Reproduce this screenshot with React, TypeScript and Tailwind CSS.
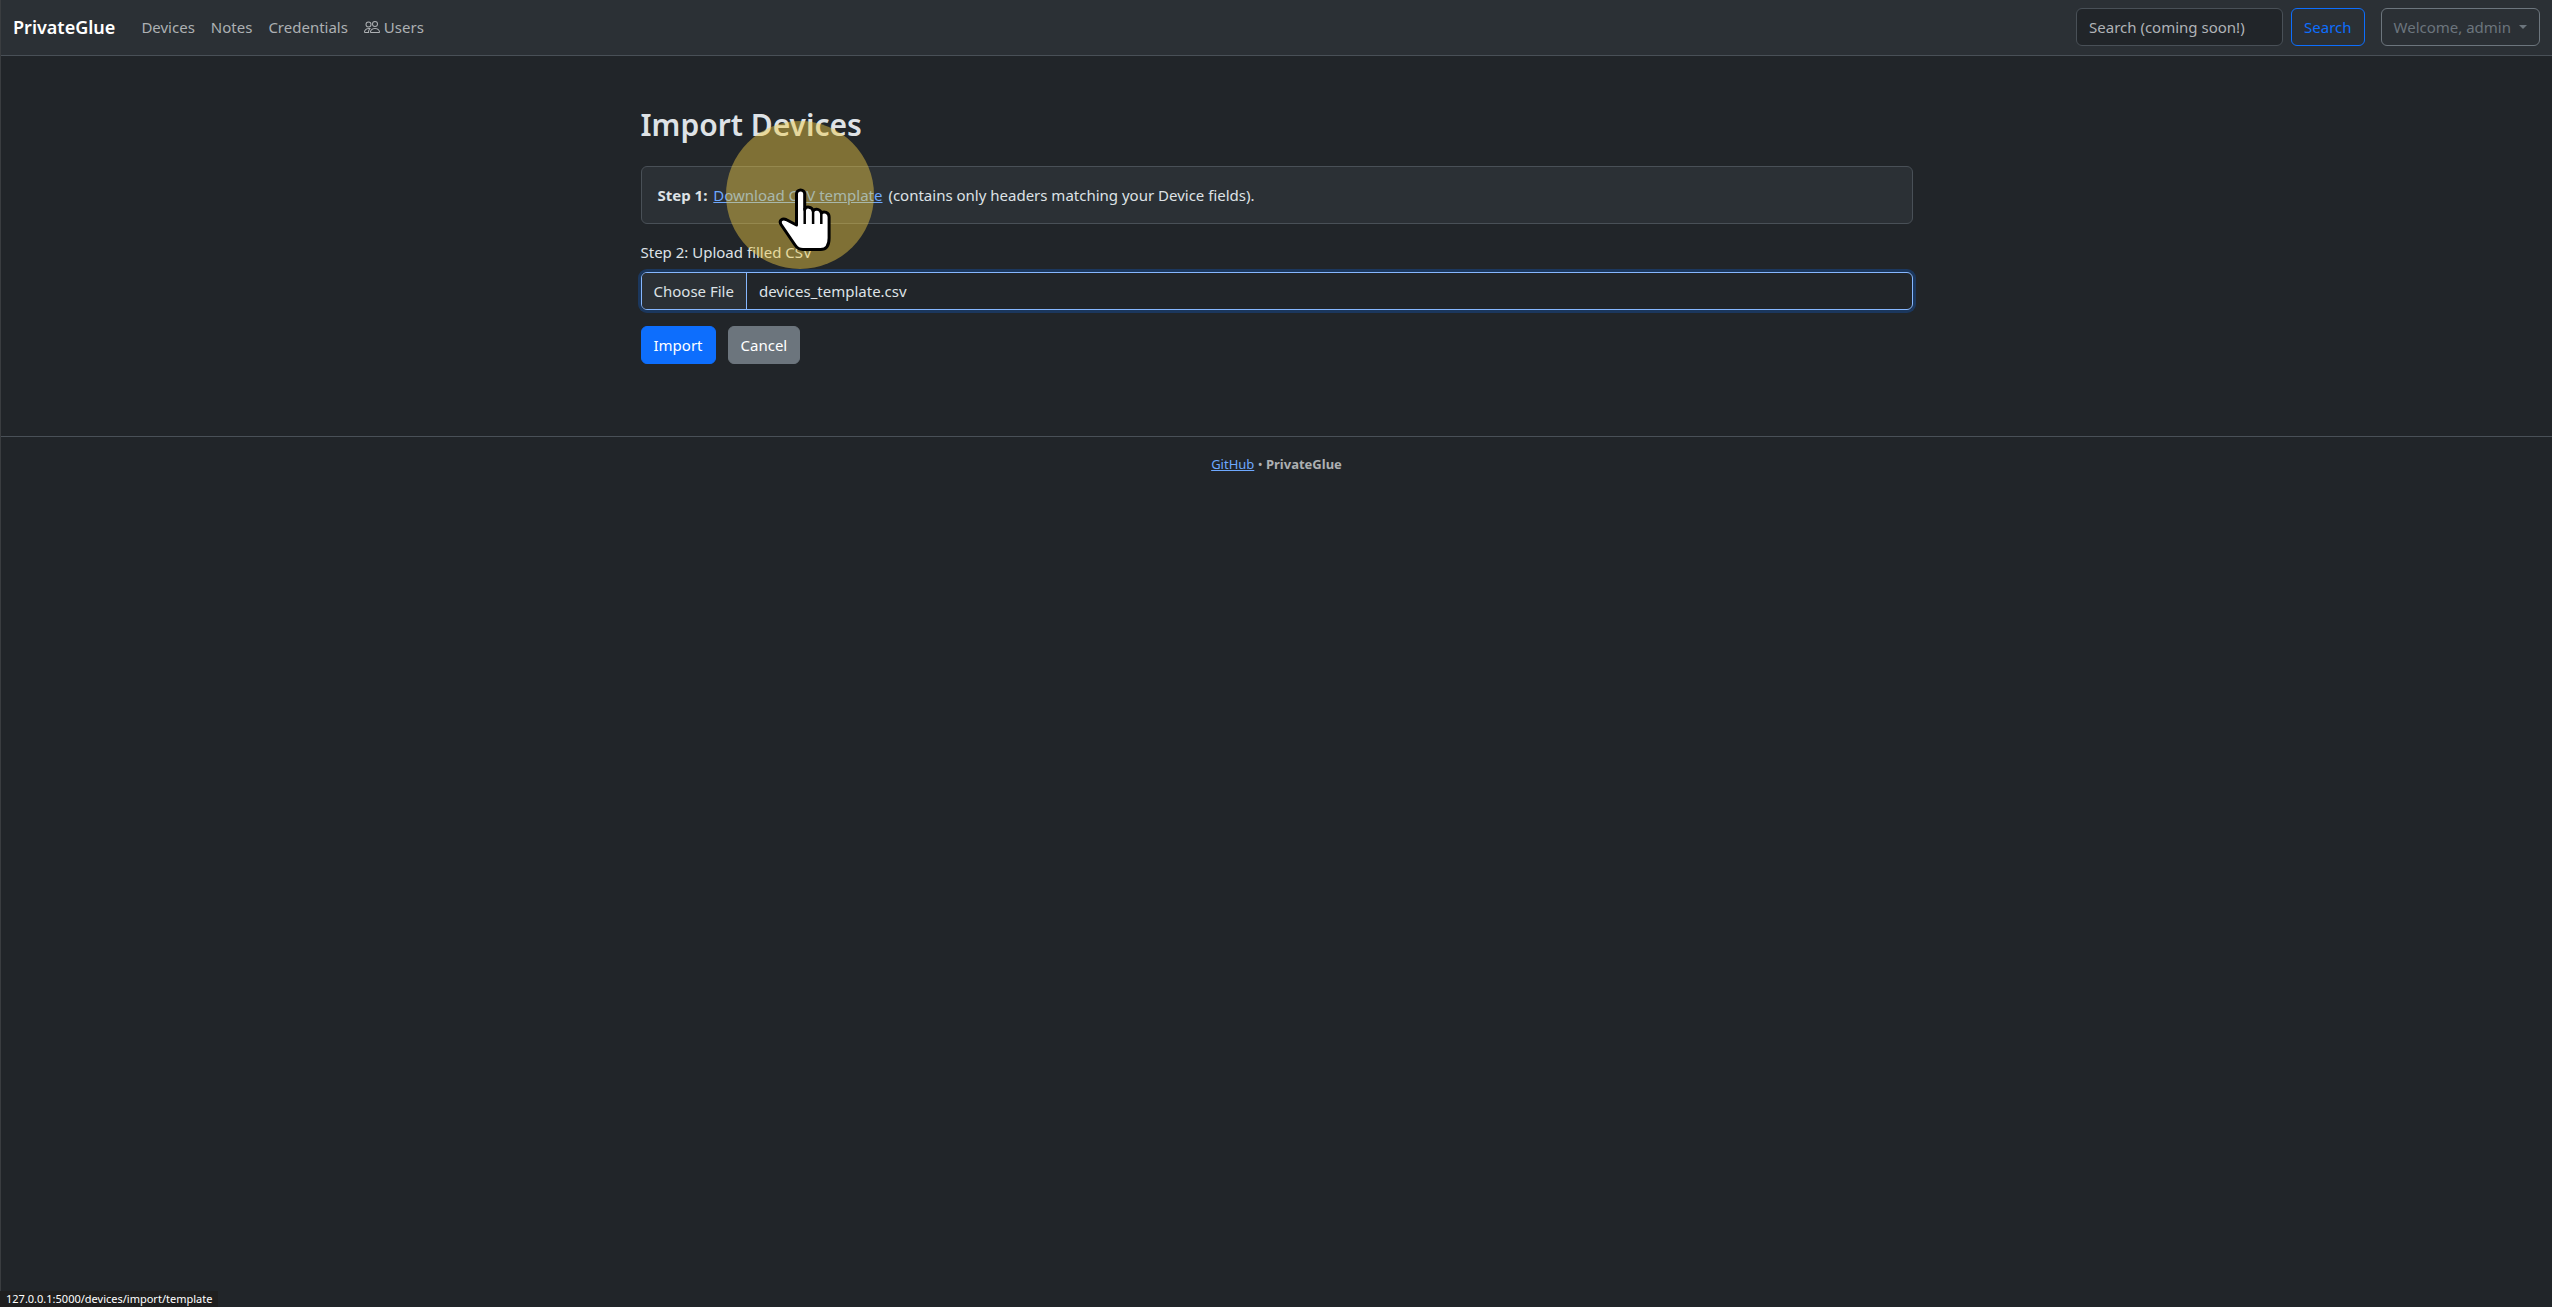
import React, { useEffect, useRef } from 'react';

const navLinks = ['Devices', 'Notes', 'Credentials'];

function PeopleIcon() {
  return (
    <svg className="inline-block size-4 align-[-2px]" viewBox="0 0 16 16" fill="currentColor" aria-hidden="true">
      <path d="M15 14s1 0 1-1-1-4-5-4-5 3-5 4 1 1 1 1zm-7.978-1L7 12.996c.001-.264.167-1.03.76-1.72C8.312 10.629 9.282 10 11 10c1.717 0 2.687.63 3.24 1.276.593.69.758 1.457.76 1.72l-.008.002-.014.002zM11 7a2 2 0 1 0 0-4 2 2 0 0 0 0 4m3-2a3 3 0 1 1-6 0 3 3 0 0 1 6 0M6.936 9.28a6 6 0 0 0-1.23-.247A7 7 0 0 0 5 9c-4 0-5 3-5 4q0 1 1 1h4.216A2.24 2.24 0 0 1 5 13c0-1.01.377-2.042 1.09-2.904.243-.294.526-.569.846-.816M4.92 10A5.5 5.5 0 0 0 4 13H1c0-.26.164-1.03.76-1.724.545-.636 1.492-1.256 3.16-1.275ZM1.5 5.5a3 3 0 1 1 6 0 3 3 0 0 1-6 0m3-2a2 2 0 1 0 0 4 2 2 0 0 0 0-4" />
    </svg>
  );
}

function Pointer() {
  return (
    <svg
      className="pointer-events-none absolute top-1/2 left-1/2 z-10 ml-0.5 size-[148px] max-w-none -translate-x-1/2 -translate-y-1/2"
      viewBox="0 0 148 148"
      aria-hidden="true"
    >
      <circle cx="74" cy="74" r="74" fill="#f2cc44" fillOpacity="0.45" />
      <path
        d="M70.5 104V73a4.1 4.1 0 0 1 8.2 0V88.500c1-3.400 7.400-3.400 8.400 1.500 2-3 7.400-2 8.200 2 2.500-2 7.800-1 7.800 4V117c0 8-3 11.500-8.500 11.500H77c-3.500 0-6-1.500-8-4.500L55 103.500c-2.500-4 1.500-6.500 5-5z"
        fill="#fff"
        stroke="#000"
        strokeWidth="3"
        strokeLinejoin="round"
      />
      <path d="M78.7 87v16M87.1 90v13M95.3 92v11" stroke="#000" strokeWidth="2.5" />
    </svg>
  );
}

function Navbar() {
  return (
    <header className="flex min-h-14 items-center border-b border-[#495057] bg-[#2b3035] px-3 pb-px">
      <a href="#" className="text-lg leading-6 font-semibold text-white">PrivateGlue</a>
      <nav className="ml-[18px] flex text-[#adb0b3]">
        {navLinks.map((label) => (
          <a key={label} href="#" className="px-2">{label}</a>
        ))}
        <a href="#" className="px-2"><PeopleIcon /> Users</a>
      </nav>
      <form className="ml-auto flex gap-2" onSubmit={(e) => e.preventDefault()}>
        <input
          type="search"
          aria-label="Search"
          placeholder="Search (coming soon!)"
          className="w-[207px] rounded-md border border-[#495057] bg-[#212529] px-3 py-[6px] placeholder:text-[#b0b3b7]"
        />
        <button className="rounded-md border border-[#0d6efd] px-3 py-[6px] text-[#0d6efd]">Search</button>
      </form>
      <button aria-haspopup="menu" className="ml-4 flex items-center gap-2 rounded-md border border-[#6c757d] px-3 py-[6px] text-[#6c757d]">
        Welcome, admin
        <span className="border-x-4 border-t-4 border-x-transparent" />
      </button>
    </header>
  );
}

export default function App() {
  const fileRef = useRef<HTMLInputElement>(null);

  useEffect(() => {
    const transfer = new DataTransfer();
    transfer.items.add(new File([''], 'devices_template.csv', { type: 'text/csv' }));
    if (fileRef.current) fileRef.current.files = transfer.files;
  }, []);

  return (
    <div className="min-h-screen border-l border-[#3a3d40] bg-[#212529] font-['Noto_Sans','Open_Sans',sans-serif] text-[15px] leading-6 text-[#dee2e6]">
      <Navbar />

      <main className="mx-auto max-w-[1320px] px-6 pt-[50px] pb-[72px]">
        <h2 className="mb-[22px] text-[30px] leading-[38px] font-semibold">Import Devices</h2>

        <div className="mb-4 rounded-md border border-[#495057] bg-[#2b3035] p-4">
          <strong>Step 1:</strong>{' '}
          <span className="relative mx-0.5 inline-block">
            <a href="#" className="text-[#6ea8fe] underline">Download CSV template</a>
            <Pointer />
          </span>{' '}
          (contains only headers matching your Device fields).
        </div>

        <form onSubmit={(e) => e.preventDefault()}>
          <label htmlFor="csv" className="mb-2 block">Step 2: Upload filled CSV</label>
          <input
            ref={fileRef}
            id="csv"
            type="file"
            accept=".csv"
            className="mb-4 block h-[38px] w-full overflow-hidden rounded-md border border-[#86b7fe] ring-3 ring-[#0d6efd]/25 file:mr-3 file:h-9 file:border-r file:border-[#86b7fe] file:bg-[#2b3035] file:px-3 file:text-[#dee2e6]"
          />
          <div className="flex gap-3">
            <button className="rounded-md border border-[#0d6efd] bg-[#0d6efd] px-3 py-[6px] text-white">Import</button>
            <button type="button" className="rounded-md border border-[#6c757d] bg-[#6c757d] px-3 py-[6px] text-white">Cancel</button>
          </div>
        </form>
      </main>

      <footer className="border-t border-[#495057] py-4 text-center text-[13px] leading-[22px] text-[#adb0b3]">
        <a href="#" className="text-[#6ea8fe] underline">GitHub</a> • <strong>PrivateGlue</strong>
      </footer>

      <div className="fixed bottom-0 left-0 bg-[#1f1f1f] px-[6px] text-[11px] leading-4 text-white">
        127.0.0.1:5000/devices/import/template
      </div>
    </div>
  );
}
